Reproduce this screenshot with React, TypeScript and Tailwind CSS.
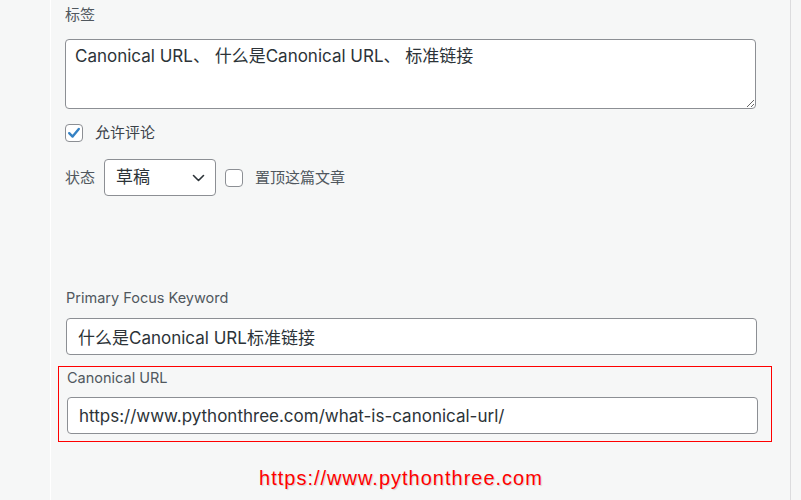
import React from 'react'

const font = { fontFamily: 'Inter, "Noto Sans CJK SC", sans-serif' }

const CheckBox: React.FC<{ checked?: boolean }> = ({ checked }) => (
  <span className="flex h-[18px] w-[18px] shrink-0 items-center justify-center rounded-[4px] border border-[#8c8f94] bg-white">
    {checked && (
      <svg width="16" height="16" viewBox="0 0 16 16">
        <path d="M3.2 8.2 L6.6 11.6 L12.8 4" fill="none" stroke="#3582c4" strokeWidth="2.4" strokeLinecap="round" strokeLinejoin="round" />
      </svg>
    )}
  </span>
)

export default function App() {
  return (
    <div
      className="flex h-[500px] w-[801px] overflow-hidden bg-[#f6f7f7] text-[#2c3338]"
      style={font}
    >
      <div className="w-[51px] shrink-0 border-r border-white" />

      <div className="flex w-[739px] flex-col pl-[14px] pr-[33px]">
        <label className="mt-[5px] text-[15px] leading-5 text-[#50575e]">标签</label>
        <textarea
          readOnly
          defaultValue="Canonical URL、 什么是Canonical URL、 标准链接"
          className="mt-[14px] h-[70px] w-[691px] resize-y rounded-[4px] border border-[#8c8f94] bg-white px-[9px] py-[4px] text-[17px] leading-[24px] text-[#2c3338] outline-none"
          style={font}
        />

        <div className="mt-[14px] flex items-center gap-[12px]">
          <CheckBox checked />
          <span className="text-[15px] leading-5 text-[#3c434a]">允许评论</span>
        </div>

        <div className="mt-[16px] flex items-center">
          <span className="mr-[9px] text-[15px] leading-5 text-[#50575e]">状态</span>
          <div className="flex h-[37px] w-[112px] items-center justify-between rounded-[4px] border border-[#8c8f94] bg-white pl-[11px] pr-[10px]">
            <span className="text-[17px] text-[#2c3338]">草稿</span>
            <svg width="13" height="8" viewBox="0 0 13 8">
              <path d="M1.5 1.5 L6.5 6.5 L11.5 1.5" fill="none" stroke="#2c3338" strokeWidth="1.6" strokeLinecap="round" strokeLinejoin="round" />
            </svg>
          </div>
          <span className="ml-[9px]">
            <CheckBox />
          </span>
          <span className="ml-[12px] text-[15px] leading-5 text-[#50575e]">置顶这篇文章</span>
        </div>

        <label className="mt-[92px] pl-[1px] text-[14.5px] leading-5 text-[#50575e]">Primary Focus Keyword</label>
        <input
          readOnly
          value="什么是Canonical URL标准链接"
          className="mt-[10px] ml-[1px] h-[37px] w-[691px] rounded-[4px] border border-[#8c8f94] bg-white px-[11px] text-[17px] text-[#2c3338] outline-none"
          style={font}
        />

        <div className="mt-[11px] ml-[-7px] w-[714px] border border-[#ff0000] pb-[7px] pl-[7px] pr-[13px] pt-[1px]">
          <label className="block pl-[1px] text-[14.5px] leading-5 text-[#50575e]">Canonical URL</label>
          <input
            readOnly
            value="https://www.pythonthree.com/what-is-canonical-url/"
            className="mt-[9px] ml-[1px] h-[37px] w-[691px] rounded-[4px] border border-[#8c8f94] bg-white px-[11px] text-[17px] text-[#2c3338] outline-none"
            style={font}
          />
        </div>

        <div className="mt-[24px] mr-[20px] text-center">
          <span
            className="text-[20px] leading-6 tracking-[1px] text-[#ff0000] [text-shadow:1px_1px_1px_rgba(0,0,0,0.15)]"
            style={{ fontFamily: '"Liberation Sans", Arial, sans-serif' }}
          >
            https://www.pythonthree.com
          </span>
        </div>
      </div>

      <div className="w-[11px] shrink-0 border-l border-[#dcdcde]" />
    </div>
  )
}
